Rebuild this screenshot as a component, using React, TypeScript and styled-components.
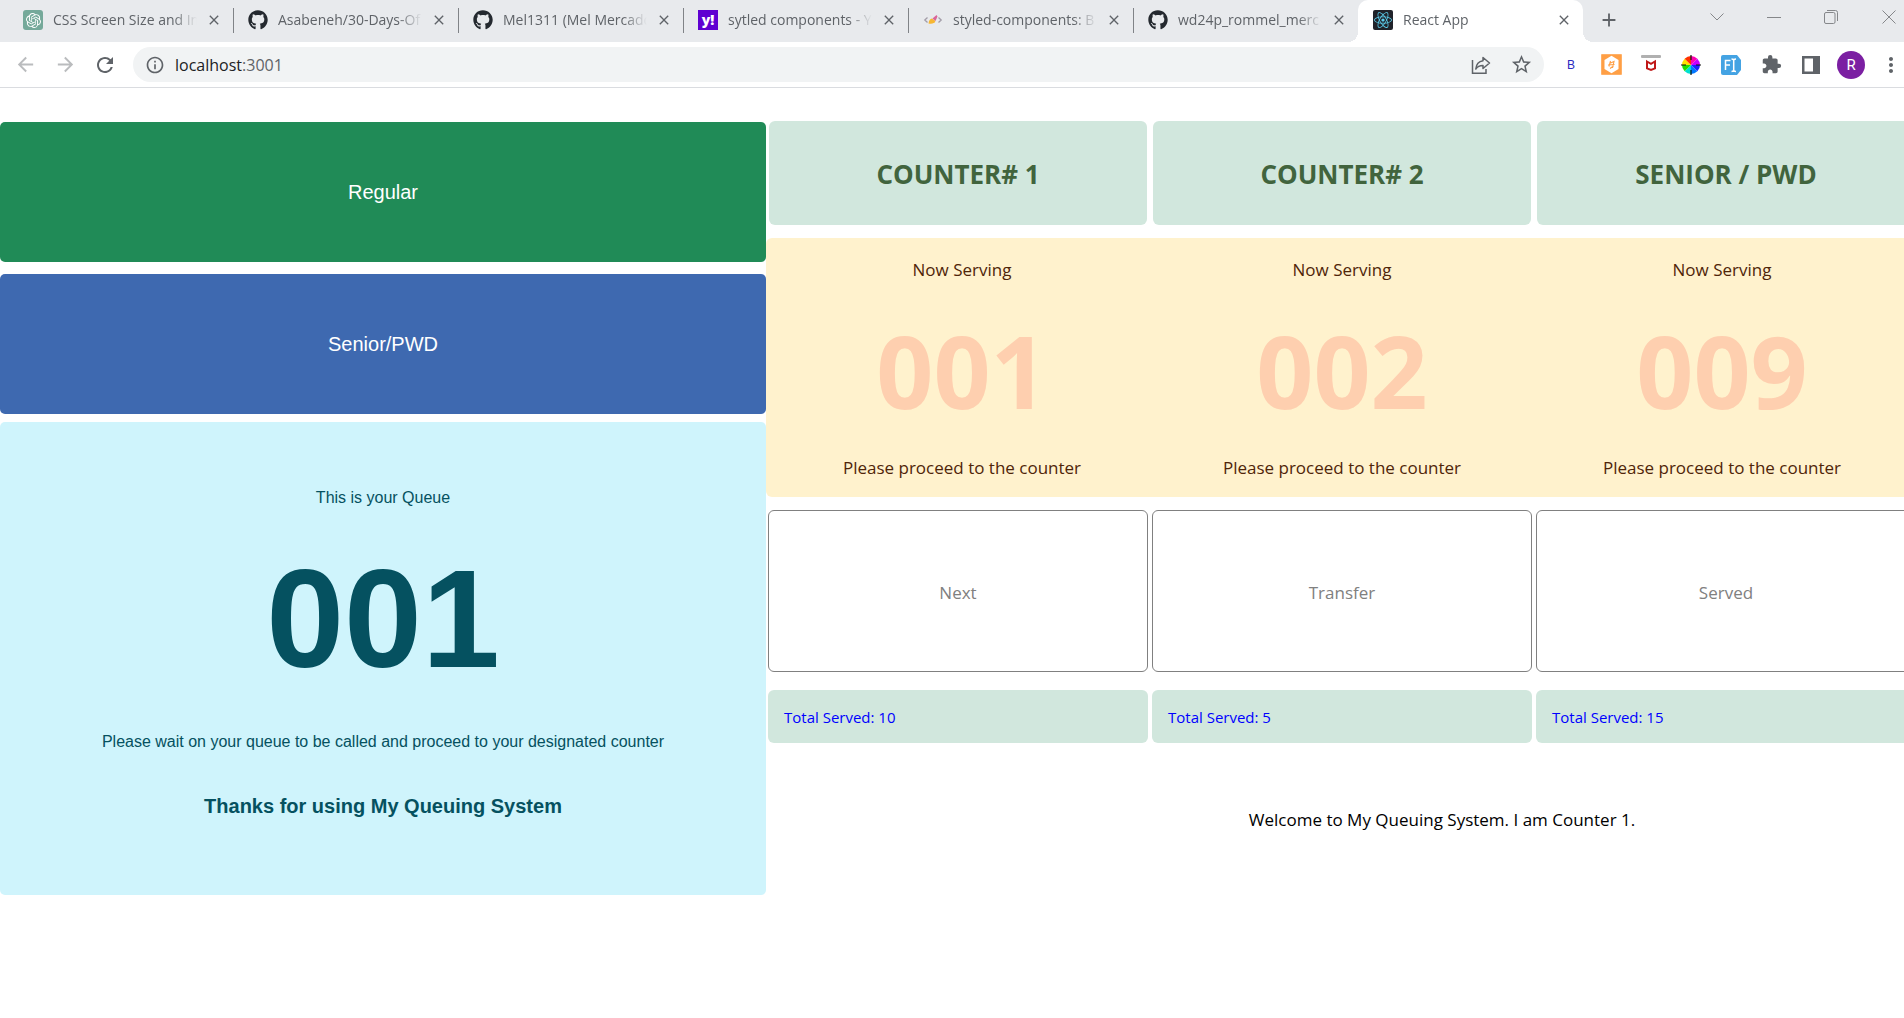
import React from "react";
import styled, { createGlobalStyle, css } from "styled-components";
import { FaGithub, FaReact } from "react-icons/fa";
import { SiOpenai } from "react-icons/si";
import {
  MdAdd,
  MdArrowBack,
  MdArrowForward,
  MdClose,
  MdExtension,
  MdInfoOutline,
  MdMoreVert,
  MdRefresh,
  MdStarBorder,
} from "react-icons/md";

const uiFont = `"Open Sans", "Noto Sans", sans-serif`;
const kioskFont = `"Liberation Sans", Arial, sans-serif`;

const GlobalStyle = createGlobalStyle`
  *, *::before, *::after { box-sizing: border-box; }
  body { margin: 0; background: #fff; font-family: ${uiFont}; overflow-x: hidden; }
  button, input { font: inherit; }
  h1, h2, p { margin: 0; }
  svg { display: block; flex: none; }
`;

/* ---------- Browser chrome ---------- */

const TabStrip = styled.nav`
  display: flex;
  align-items: stretch;
  height: 42px;
  padding-left: 8px;
  background: #e8eaed;
`;

const Tab = styled.div<{ $active?: boolean; $divider?: boolean }>`
  position: relative;
  display: flex;
  align-items: center;
  flex: 0 1 225px;
  min-width: 0;
  padding: 0 12px 2px 15px;
  gap: 10px;
  color: #5f6368;
  ${(p) =>
    p.$divider &&
    css`
      &::after {
        content: "";
        position: absolute;
        right: -1px;
        top: 8px;
        width: 1px;
        height: 25px;
        background: #808387;
      }
    `}
  ${(p) =>
    p.$active &&
    css`
      background: #fff;
      border-radius: 10px 10px 0 0;
      &::before,
      &::after {
        content: "";
        position: absolute;
        bottom: 0;
        width: 10px;
        height: 10px;
      }
      &::before {
        left: -10px;
        background: radial-gradient(circle at 0 0, transparent 10px, #fff 10px);
      }
      &::after {
        right: -10px;
        background: radial-gradient(circle at 100% 0, transparent 10px, #fff 10px);
      }
    `}
`;

const Favicon = styled.span<{ $bg?: string; $fg?: string; $radius?: number }>`
  display: flex;
  align-items: center;
  justify-content: center;
  flex: none;
  width: 20px;
  height: 20px;
  overflow: hidden;
  border-radius: ${(p) => p.$radius ?? 0}px;
  background: ${(p) => p.$bg ?? "transparent"};
  color: ${(p) => p.$fg ?? "#24292f"};
  font: 800 14px/18px ${uiFont};
`;

const TabTitle = styled.span`
  flex: 1;
  min-width: 0;
  overflow: hidden;
  white-space: nowrap;
  font-size: 14px;
  line-height: 20px;
  mask-image: linear-gradient(to right, #000 calc(100% - 24px), transparent);
`;

const IconButton = styled.button<{ $size?: number; $color?: string }>`
  display: flex;
  align-items: center;
  justify-content: center;
  flex: none;
  width: ${(p) => p.$size ?? 40}px;
  height: ${(p) => p.$size ?? 40}px;
  padding: 0;
  border: 0;
  background: none;
  color: ${(p) => p.$color ?? "#5f6368"};
`;

const NewTab = styled(IconButton)`
  margin-left: 6px;
`;

const WindowControls = styled.div`
  display: flex;
  margin-left: auto;
  height: 34px;
`;

const WindowButton = styled.button`
  display: flex;
  align-items: center;
  justify-content: center;
  width: 57px;
  padding: 0;
  border: 0;
  background: none;
  color: #85878a;
  &:last-child {
    width: 60px;
    margin-right: -15px;
  }
`;

const Toolbar = styled.header`
  display: flex;
  align-items: center;
  height: 46px;
  padding: 0 0 0 5px;
  background: #fff;
  border-bottom: 1px solid #dadce0;
`;

const Omnibox = styled.form`
  display: flex;
  align-items: center;
  flex: 1;
  min-width: 0;
  height: 35px;
  margin-left: 8px;
  padding: 0 3px 0 12px;
  border-radius: 18px;
  background: #f1f3f4;
  color: #5f6368;
`;

const Address = styled.span`
  flex: 1;
  min-width: 0;
  margin-left: 10px;
  font-size: 16px;
  line-height: 24px;
`;

const Host = styled.span`
  color: #202124;
`;

const Extensions = styled.div`
  display: flex;
  margin-left: 7px;
  margin-right: -7px;
`;

const BadgeLetter = styled.span`
  font: 400 12px/20px ${kioskFont};
  color: #2a2ac0;
`;

const Avatar = styled.span`
  width: 28px;
  height: 28px;
  border-radius: 50%;
  background: #7b1fa2;
  color: #fff;
  font: 400 15px/28px Roboto, sans-serif;
  text-align: center;
`;

/* ---------- Queue page ---------- */

const Board = styled.main`
  display: grid;
  grid-template-columns: minmax(0, 383fr) minmax(0, 576fr);
  align-items: start;
  width: calc(100% + 14px);
  padding-top: 33px;
`;

const Kiosk = styled.section`
  display: flex;
  flex-direction: column;
  padding-top: 1px;
  font-family: ${kioskFont};
`;

const QueueButton = styled.button<{ $bg: string }>`
  height: 140px;
  margin-bottom: 12px;
  padding: 0;
  border: 0;
  border-radius: 5px;
  background: ${(p) => p.$bg};
  color: #fff;
  font-size: 20px;
  line-height: 24px;
  & + & {
    margin-bottom: 8px;
  }
`;

const Ticket = styled.section`
  display: flex;
  flex-direction: column;
  align-items: center;
  padding: 64px 16px 75px;
  border-radius: 5px;
  background: #cff4fc;
  color: #055160;
  text-align: center;
`;

const TicketText = styled.p`
  font-size: 16px;
  line-height: 24px;
`;

const TicketNumber = styled.p`
  margin: 25px 0 27px;
  font-size: 140px;
  font-weight: 700;
  line-height: 168px;
`;

const TicketThanks = styled.h2`
  margin-top: 38px;
  font-size: 20px;
  line-height: 28px;
`;

const Counters = styled.section`
  display: flex;
  flex-direction: column;
`;

const Row = styled.div<{ $gap: number; $pad: number }>`
  display: grid;
  grid-template-columns: repeat(3, minmax(0, 1fr));
  column-gap: ${(p) => p.$gap}px;
  padding: 0 ${(p) => p.$pad}px;
`;

const CounterTitle = styled.h2`
  display: flex;
  align-items: center;
  justify-content: center;
  height: 104px;
  padding-top: 2px;
  border-radius: 6px;
  background: #d1e7dd;
  color: #41643d;
  font-size: 26px;
  line-height: 36px;
`;

const ServingPanel = styled.div`
  margin: 13px 0;
  padding: 18px 0 15px;
  border-radius: 6px;
  background: #fff2cd;
  color: #4f2509;
`;

const Serving = styled.div`
  text-align: center;
  font-size: 17px;
  line-height: 28px;
`;

const ServingNumber = styled.p`
  margin: 16px 0 14px;
  color: #fecfaf;
  font-size: 100px;
  font-weight: 700;
  line-height: 140px;
`;

const ActionButton = styled.button`
  height: 162px;
  padding: 4px 0 0;
  border: 1px solid #808080;
  border-radius: 6px;
  background: #fff;
  color: #808080;
  font-size: 17px;
  line-height: 28px;
`;

const Totals = styled.div`
  margin-top: 18px;
`;

const Total = styled.p`
  padding: 15px 16px 14px;
  border-radius: 6px;
  background: #d1e7dd;
  color: #0000ff;
  font-size: 15px;
  line-height: 24px;
`;

const Welcome = styled.p`
  margin-top: 63px;
  padding-left: 200px;
  text-align: center;
  color: #000;
  font-size: 17px;
  line-height: 28px;
`;

/* ---------- Drawings ---------- */

const StyledLogo = () => (
  <svg width="20" height="20" viewBox="0 0 20 20" fill="none">
    <path d="M4.500 7.500 L1.800 10 L4.500 12.500" stroke="#a39da8" strokeWidth="1.300" />
    <path d="M15.500 7.500 L18.200 10 L15.500 12.500" stroke="#a39da8" strokeWidth="1.300" />
    <path d="M5.500 13.500 Q6 9 9 8.500 L12.500 11 Q11 14.500 5.500 13.500Z" fill="#f7b733" />
    <path d="M9.500 8.500 L13.500 5 L14.500 6.500 L12.500 11Z" fill="#d9669a" />
  </svg>
);

const ShareIcon = () => (
  <svg width="20" height="20" viewBox="0 0 20 20" fill="none" stroke="#5f6368" strokeWidth="1.500">
    <path d="M1.500 5 V18.300 H15 V14" />
    <path d="M12 2.500 L18.500 8 L12 13.500 V10.500 Q7 10.500 4.800 14 Q5.500 6.500 12 5.700 Z" strokeLinejoin="round" />
  </svg>
);

const OrangeIcon = () => (
  <svg width="21" height="21" viewBox="0 0 21 21">
    <rect width="21" height="21" rx="1" fill="#ffb066" />
    <rect x="1" y="1" width="19" height="19" fill="#ff9f45" />
    <path d="M10.500 1.800 L17.500 6 V15 L10.500 19.200 L3.500 15 V6Z" fill="#fff" />
    <path d="M8 12.500 L9.500 7 M8.500 9.500 L13 7.500 L11.500 14 M7 11 L13.500 10.500 M9 14.500 L12.500 12" stroke="#ff9f45" strokeWidth="1.100" fill="none" />
  </svg>
);

const ShieldIcon = () => (
  <svg width="20" height="20" viewBox="0 0 20 20">
    <rect y="0" width="20" height="3" rx="1" fill="#b0b0b0" />
    <path d="M6 6.500 L10 8.800 L14 6.500 V13.300 L10 15 L6 13.300Z" fill="none" stroke="#c01818" strokeWidth="2" />
  </svg>
);

const wheelColors = ["#ff00b0", "#c800ff", "#2020ff", "#0078ff", "#00e0d0", "#20e000", "#ffe000", "#ff3000"];

const ColorWheel = () => (
  <svg width="20" height="20" viewBox="-10 -10 20 20">
    {wheelColors.map((color, i) => (
      <path key={color} d="M0 0 V-9 A9 9 0 0 1 6.364 -6.364Z" fill={color} transform={`rotate(${i * 45})`} />
    ))}
    <path d="M0 -10 V-5 M0 10 V5 M-10 0 H-5 M10 0 H5" stroke="#111" strokeWidth="1.200" />
  </svg>
);

const FontToolIcon = () => (
  <svg width="20" height="20" viewBox="0 0 20 20">
    <path d="M2 0 H16 L20 5 V15 L16 20 H2 Q0 20 0 18 V2 Q0 0 2 0Z" fill="#44a3e3" />
    <path d="M4.500 15 V5.500 H9.500 M4.500 10 H9 M10.500 4 Q12.700 4 12.700 5.500 Q12.700 4 15 4 M12.700 5.500 V15 M10.500 16.500 Q12.700 16.500 12.700 15 Q12.700 16.500 15 16.500" stroke="#fff" strokeWidth="1.500" fill="none" />
  </svg>
);

const SidePanelIcon = () => (
  <svg width="18" height="18" viewBox="0 0 18 18">
    <path d="M0 0 H18 V18 H0Z M2.500 2.500 V15.500 H11 V2.500Z" fillRule="evenodd" fill="#5f6368" />
  </svg>
);

const GithubMark = () => (
  <Favicon>
    <FaGithub size={20} />
  </Favicon>
);

const tabs = [
  {
    title: "CSS Screen Size and In",
    icon: (
      <Favicon $bg="#75a99a" $fg="#fff" $radius={3}>
        <SiOpenai size={15} />
      </Favicon>
    ),
  },
  { title: "Asabeneh/30-Days-Of", icon: <GithubMark /> },
  { title: "Mel1311 (Mel Mercado", icon: <GithubMark /> },
  {
    title: "sytled components - Y",
    icon: (
      <Favicon $bg="#5f01d1" $fg="#fff">
        y!
      </Favicon>
    ),
  },
  {
    title: "styled-components: B",
    icon: (
      <Favicon>
        <StyledLogo />
      </Favicon>
    ),
  },
  { title: "wd24p_rommel_merc", icon: <GithubMark /> },
  {
    title: "React App",
    icon: (
      <Favicon $bg="#20232a" $fg="#5ccfee" $radius={2}>
        <FaReact size={18} />
      </Favicon>
    ),
  },
];

const counters = [
  { name: "COUNTER# 1", number: "001", action: "Next", total: 10 },
  { name: "COUNTER# 2", number: "002", action: "Transfer", total: 5 },
  { name: "SENIOR / PWD", number: "009", action: "Served", total: 15 },
];

function BrowserTabs() {
  return (
    <TabStrip aria-label="Tabs">
      {tabs.map((tab, i) => (
        <Tab key={tab.title} $active={i === tabs.length - 1} $divider={i < tabs.length - 2}>
          {tab.icon}
          <TabTitle>{tab.title}</TabTitle>
          <IconButton $size={14} aria-label="Close tab">
            <MdClose size={16} />
          </IconButton>
        </Tab>
      ))}
      <NewTab aria-label="New tab">
        <MdAdd size={22} />
      </NewTab>
      <WindowControls>
        <WindowButton aria-label="Search tabs">
          <svg width="14" height="8" viewBox="0 0 14 8" fill="none" stroke="currentColor">
            <path d="M0.500 0.500 L7 7 L13.500 0.500" />
          </svg>
        </WindowButton>
        <WindowButton aria-label="Minimize">
          <svg width="14" height="1" viewBox="0 0 14 1">
            <rect width="14" height="1" fill="currentColor" />
          </svg>
        </WindowButton>
        <WindowButton aria-label="Restore">
          <svg width="14" height="14" viewBox="0 0 14 14" fill="none" stroke="currentColor">
            <rect x="0.500" y="2.500" width="10.500" height="11" rx="1.500" />
            <path d="M3 0.500 H11.500 Q13.500 0.500 13.500 2.500 V11" />
          </svg>
        </WindowButton>
        <WindowButton aria-label="Close window">
          <svg width="14" height="14" viewBox="0 0 14 14" stroke="currentColor">
            <path d="M0.500 0.500 L13.500 13.500 M13.500 0.500 L0.500 13.500" />
          </svg>
        </WindowButton>
      </WindowControls>
    </TabStrip>
  );
}

function BrowserToolbar() {
  return (
    <Toolbar>
      <IconButton aria-label="Back" $color="#babcbe"><MdArrowBack size={23} /></IconButton>
      <IconButton aria-label="Forward" $color="#babcbe"><MdArrowForward size={23} /></IconButton>
      <IconButton aria-label="Reload"><MdRefresh size={24} /></IconButton>
      <Omnibox>
        <MdInfoOutline size={20} />
        <Address>
          <Host>localhost</Host>:3001
        </Address>
        <IconButton type="button" aria-label="Share"><ShareIcon /></IconButton>
        <IconButton type="button" aria-label="Bookmark"><MdStarBorder size={23} /></IconButton>
      </Omnibox>
      <Extensions>
        <IconButton aria-label="Bootstrap"><BadgeLetter>B</BadgeLetter></IconButton>
        <IconButton aria-label="Honey"><OrangeIcon /></IconButton>
        <IconButton aria-label="Web advisor"><ShieldIcon /></IconButton>
        <IconButton aria-label="Color picker"><ColorWheel /></IconButton>
        <IconButton aria-label="Font finder"><FontToolIcon /></IconButton>
        <IconButton aria-label="Extensions"><MdExtension size={21} /></IconButton>
        <IconButton aria-label="Side panel"><SidePanelIcon /></IconButton>
        <IconButton aria-label="Profile"><Avatar>R</Avatar></IconButton>
        <IconButton aria-label="Menu"><MdMoreVert size={24} /></IconButton>
      </Extensions>
    </Toolbar>
  );
}

export default function App() {
  return (
    <>
      <GlobalStyle />
      <BrowserTabs />
      <BrowserToolbar />
      <Board>
        <Kiosk>
          <QueueButton $bg="#208b57">Regular</QueueButton>
          <QueueButton $bg="#3e69b0">Senior/PWD</QueueButton>
          <Ticket>
            <TicketText>This is your Queue</TicketText>
            <TicketNumber>001</TicketNumber>
            <TicketText>
              Please wait on your queue to be called and proceed to your designated counter
            </TicketText>
            <TicketThanks>Thanks for using My Queuing System</TicketThanks>
          </Ticket>
        </Kiosk>
        <Counters>
          <Row $gap={6} $pad={3}>
            {counters.map((c) => (
              <CounterTitle key={c.name}>{c.name}</CounterTitle>
            ))}
          </Row>
          <ServingPanel>
            <Row $gap={0} $pad={6}>
              {counters.map((c) => (
                <Serving key={c.name}>
                  <p>Now Serving</p>
                  <ServingNumber>{c.number}</ServingNumber>
                  <p>Please proceed to the counter</p>
                </Serving>
              ))}
            </Row>
          </ServingPanel>
          <Row $gap={4} $pad={2}>
            {counters.map((c) => (
              <ActionButton key={c.name}>{c.action}</ActionButton>
            ))}
          </Row>
          <Totals>
            <Row $gap={4} $pad={2}>
              {counters.map((c) => (
                <Total key={c.name}>Total Served: {c.total}</Total>
              ))}
            </Row>
          </Totals>
          <Welcome>Welcome to My Queuing System. I am Counter 1.</Welcome>
        </Counters>
      </Board>
    </>
  );
}
